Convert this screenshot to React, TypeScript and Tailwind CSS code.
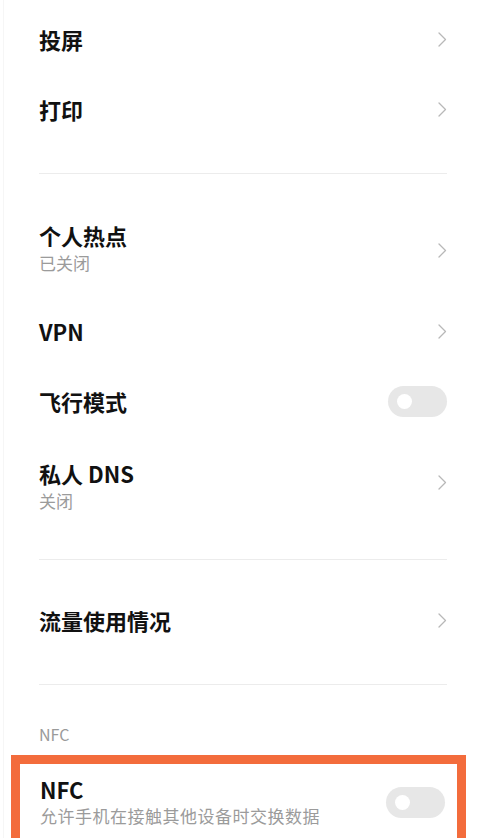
import React from "react";

const font = { fontFamily: '"Noto Sans CJK SC", "Noto Sans", sans-serif' };

function Chevron() {
  return (
    <svg width="9" height="15" viewBox="0 0 9 15" fill="none" className="shrink-0">
      <path d="M1 1 L7.5 7.5 L1 14" stroke="#b8b8b8" strokeWidth="1.3" strokeLinecap="round" strokeLinejoin="round" />
    </svg>
  );
}

function Toggle() {
  return (
    <div className="w-[59px] h-[31px] rounded-full bg-[#e7e7e7] flex items-center pl-[9px] shrink-0">
      <div className="w-[15px] h-[15px] rounded-full bg-white" />
    </div>
  );
}

function Row({
  title,
  sub,
  right,
  tall,
  textCls = "",
}: {
  title: string;
  sub?: string;
  right: "chev" | "toggle";
  tall?: boolean;
  textCls?: string;
}) {
  return (
    <div className={`flex items-center justify-between pl-[39px] pr-[30px] ${tall ? "h-[92px]" : "h-[70px]"}`}>
      <div className={`flex flex-col ${textCls}`}>
        <div className="text-[22px] leading-[28px] font-bold text-[#111111]">{title}</div>
        {sub && <div className="text-[17px] leading-[22px] mt-[3px] text-[#9b9b9b]">{sub}</div>}
      </div>
      <div>{right === "chev" ? <Chevron /> : <Toggle />}</div>
    </div>
  );
}

function Divider() {
  return <div className="ml-[39px] mr-[30px] h-px bg-[#ececec]" />;
}

export default function App() {
  return (
    <div className="w-[477px] h-[838px] overflow-hidden bg-white" style={font}>
      <div className="h-full ml-[3px] border-l border-[#f6f6f6]">
        <div className="-ml-[4px]">
          <div className="h-[4px]" />
          <Row title="投屏" right="chev" />
          <Row title="打印" right="chev" />
          <div className="h-[29px]" />
          <Divider />
          <div className="h-[30px]" />
          <Row title="个人热点" sub="已关闭" right="chev" tall textCls="mb-[6px]" />
          <Row title="VPN" right="chev" />
          <Row title="飞行模式" right="toggle" />
          <Row title="私人 DNS" sub="关闭" right="chev" tall textCls="mt-[6px]" />
          <div className="h-[31px]" />
          <Divider />
          <div className="h-[25px]" />
          <Row title="流量使用情况" right="chev" />
          <div className="h-[29px]" />
          <Divider />
          <div className="pl-[39px] pt-[38px] h-[70px] text-[16px] leading-[22px] text-[#9a9a9a]">NFC</div>
          <div className="mx-[11px] border-[9px] border-[#f36c3c] h-[120px]">
            <div className="flex items-start justify-between pl-[20px] pr-[12px] pt-[11px]">
              <div className="flex flex-col">
                <div className="text-[22px] leading-[28px] font-bold text-[#111111]">NFC</div>
                <div className="text-[17px] leading-[22px] mt-[2px] tracking-[0.5px] text-[#9b9b9b]">允许手机在接触其他设备时交换数据</div>
              </div>
              <div className="mt-[12px]">
                <Toggle />
              </div>
            </div>
          </div>
        </div>
      </div>
    </div>
  );
}
